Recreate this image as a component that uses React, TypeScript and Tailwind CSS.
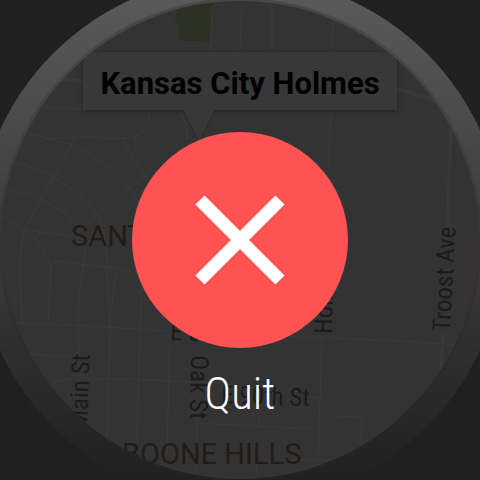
const districts = [
  { name: "SANTA FE", x: 71, y: 246 },
  { name: "BOONE HILLS", x: 122, y: 464 },
];

const streets = [
  { name: "Main St", x: 87, y: 429, angle: -88 },
  { name: "Oak St", x: 191, y: 355, angle: 91 },
  { name: "Holmes Rd", x: 332, y: 334, angle: -89 },
  { name: "Troost Ave", x: 450, y: 332, angle: -87 },
  { name: "E 90th St", x: 221, y: 403, angle: 2 },
  { name: "E 89th St", x: 170, y: 340, angle: 2 },
];

const minorRoads = [
  "M26 134 L50 138 L94 137 C112 139 136 140 142 132 Q149 125 150 110",
  "M62 79 L85 80",
  "M38 107 L85 109",
  "M44 138 C80 142 110 165 132 190 L148 220",
  "M74 139 L55 175 L41 200 L24 231 C18 255 21 285 22 322",
  "M12 161 C45 168 83 193 99 217 Q108 238 107 272",
  "M5 190 C35 192 62 208 81 228 Q88 244 83 268 Q76 300 79 350 L78 410",
  "M3 217 L24 230 L38 241 Q47 254 51 269 L48 323",
  "M24 230 L48 233 L72 236 L84 226 L124 193 L151 170",
  "M36 239 L40 232",
  "M51 269 L54 261 L116 268 L150 276",
  "M123 141 L138 166 L148 178",
  "M136 137 L134 153",
  "M107 272 L110 330 L107 438",
  "M116 268 L110 320",
  "M140 325 L137 448",
  "M142 278 L140 345",
  "M14 323 L88 326 L170 331",
  "M29 354 L78 357",
  "M50 383 L68 379 L130 379 L171 381 L220 383",
  "M170 331 L167 455",
  "M198 410 L195 475",
  "M259 385 L259 427",
  "M195 423 L315 429",
  "M212 6 L211 52",
  "M242 2 L240 52",
  "M272 4 L272 52",
  "M333 20 L332 52",
  "M180 111 Q187 124 188 140",
  "M331 111 L328 168",
  "M322 336 L320 400 L318 463",
  "M290 337 L335 338 L400 341 L455 345",
  "M307 397 L321 398 L338 417 L358 416 L362 421 L361 448",
  "M257 455 L256 478",
  "M280 460 L330 460",
];

const majorRoads = [
  "M395 88 L412 93 L438 102",
  "M451 120 L448 228",
  "M443 333 L441 372",
  "M58 79 L83 81",
];

function WatchFace() {
  return (
    <svg
      viewBox="0 0 480 480"
      className="col-start-1 row-start-1 h-full w-full"
      aria-label="Street map"
    >
      <defs>
        <linearGradient id="bezel" x1="0" y1="0" x2="0" y2="1">
          <stop offset="0.04" stopColor="#595959" />
          <stop offset="0.25" stopColor="#4c4c4c" />
          <stop offset="0.5" stopColor="#3b3b3b" />
          <stop offset="0.75" stopColor="#2c2c2c" />
          <stop offset="0.95" stopColor="#202020" />
        </linearGradient>
        <linearGradient id="lip" x1="0" y1="0" x2="0" y2="1">
          <stop offset="0" stopColor="#484848" />
          <stop offset="0.25" stopColor="#434343" />
          <stop offset="0.5" stopColor="#353535" />
          <stop offset="0.75" stopColor="#2b2b2b" />
          <stop offset="1" stopColor="#222222" />
        </linearGradient>
        <clipPath id="lens">
          <ellipse cx="240" cy="240" rx="239" ry="239" />
        </clipPath>
      </defs>
      <circle cx="240" cy="240" r="264" fill="url(#bezel)" />
      <circle cx="240" cy="240" r="242" fill="url(#lip)" />
      <g clipPath="url(#lens)">
        <rect width="480" height="480" fill="#333333" />
        <path d="M480 236 L457 242 L452 330 L480 340Z" fill="#353232" />
        <path
          d="M178 6 L213 2 L211 43 L199 41 L184 41 L179 38 L180 26 L175 22Z"
          fill="#2c3123"
        />
        <g fill="none" stroke="#383838" strokeWidth="1.5">
          {minorRoads.map((d) => (
            <path key={d} d={d} />
          ))}
        </g>
        <g fill="none" stroke="#383838" strokeWidth="4">
          {majorRoads.map((d) => (
            <path key={d} d={d} />
          ))}
        </g>
        <g
          className="font-['Roboto_Condensed',Roboto,sans-serif] text-[25px]"
          fill="#1b1b1b"
        >
          {streets.map((s) => (
            <text
              key={s.name}
              transform={`translate(${s.x} ${s.y}) rotate(${s.angle})`}
            >
              {s.name}
            </text>
          ))}
        </g>
        <g
          className="font-[Roboto,sans-serif] text-[29px]"
          fill="#231c14"
        >
          {districts.map((d) => (
            <text key={d.name} x={d.x} y={d.y}>
              {d.name}
            </text>
          ))}
        </g>
      </g>
    </svg>
  );
}

export default function App() {
  return (
    <main className="grid min-h-screen place-items-center overflow-hidden bg-[#202020] font-[Roboto,sans-serif]">
      <div className="grid aspect-square w-full max-w-[100vh] [&>svg]:overflow-visible">
        <WatchFace />
        <div className="z-10 col-start-1 row-start-1 m-px flex flex-col items-center overflow-hidden rounded-full pt-[51px]">
          <div className="relative flex h-[58px] items-center bg-[#383838] px-[17px] shadow-[0_1px_4px_#222222]">
            <span className="pt-1 text-[31px] leading-none font-bold whitespace-nowrap text-black">
              Kansas City Holmes
            </span>
            <svg
              viewBox="0 0 32 34"
              className="absolute top-full left-[100px] h-[34px] w-8"
              aria-hidden="true"
            >
              <path d="M0 0 L16 33 L32 0" fill="#383838" stroke="#2b2b2b" strokeWidth="1" />
            </svg>
          </div>
          <button
            type="button"
            aria-labelledby="quit-label"
            className="z-10 mt-[22px] grid size-[216px] shrink-0 cursor-pointer place-items-center rounded-full bg-[#ff5252]"
          >
            <svg viewBox="0 0 90 90" className="size-[90px]" aria-hidden="true">
              <path
                d="M5 5 L85 85 M85 5 L5 85"
                fill="none"
                stroke="white"
                strokeWidth="13"
              />
            </svg>
          </button>
          <span
            id="quit-label"
            className="z-10 mt-5 font-['Roboto_Condensed',Roboto,sans-serif] text-[45px] leading-[52px] font-light text-white"
          >
            Quit
          </span>
        </div>
      </div>
    </main>
  );
}
